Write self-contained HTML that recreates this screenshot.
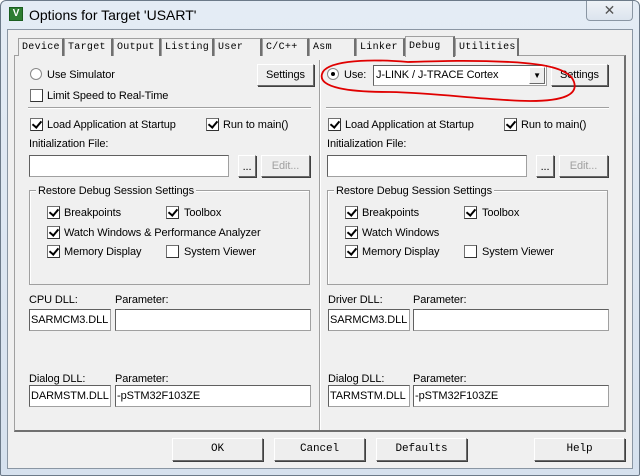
<!DOCTYPE html>
<html><head><meta charset="utf-8"><style>
*{box-sizing:border-box;margin:0;padding:0}
body{width:640px;height:476px;overflow:hidden;background:#fff;font-family:"Liberation Sans",sans-serif;font-size:11px;letter-spacing:-0.1px;color:#000;position:relative}
.a{position:absolute}
.frame{left:0;top:0;width:640px;height:476px;background:linear-gradient(#e4ecf5,#d6e1ee);border:1px solid #6c7a89;border-radius:6px 6px 2px 2px}
.client{left:7px;top:29px;width:626px;height:440px;background:#f0f0f0;border:1px solid #8a96a3}
.tab{top:38px;height:18px;background:#f0f0f0;border:1px solid #a0a0a0;border-bottom:none;border-right:2px solid #707070;font-family:"Liberation Mono",monospace;font-size:10px;letter-spacing:0.3px;padding-left:3px;line-height:17px}
.panel{left:14px;top:55px;width:612px;height:377px;border:1px solid #a0a0a0;border-right:2px solid #707070;border-bottom:2px solid #707070;background:#f0f0f0}
.cb{width:13px;height:13px;border:1px solid #333;background:#fff;border-top-color:#707070;border-left-color:#707070}
.cb.k::after{content:"";position:absolute;left:3px;top:0px;width:4px;height:7px;border:solid #000;border-width:0 2px 2px 0;transform:rotate(40deg)}
.t{white-space:nowrap;line-height:14px}
.inp{background:#fff;border:1px solid #a0a0a0;border-top-color:#606060;border-left-color:#606060;height:22px;padding:2px 1px;line-height:16px;white-space:nowrap;overflow:hidden}
.btn{background:#eee;border:1px solid #fff;border-right-color:#6a6a6a;border-bottom-color:#6a6a6a;box-shadow:1px 1px 0 #404040;text-align:center;line-height:20px}
.mono{font-family:"Liberation Mono",monospace;font-size:11px}
.grp{border:1px solid #a0a0a0;box-shadow:1px 1px 0 #fff inset}
.line{height:2px;border-top:1px solid #a0a0a0;border-bottom:1px solid #fff}
</style></head><body>
<div class="a frame"></div>
<div class="a" style="left:9px;top:7px;width:14px;height:14px;background:#2e7d32;border:1px solid #1b5e20;color:#fff;font-size:10px;font-weight:bold;line-height:12px;text-align:center">V</div>
<div class="a t" style="left:29px;top:6px;font-size:14px;line-height:18px;letter-spacing:0">Options for Target 'USART'</div>
<div class="a" style="left:586px;top:1px;width:47px;height:20px;border:1px solid #8a96a3;border-top:none;border-radius:0 0 4px 4px;background:linear-gradient(#eef2f7,#dce4ee);text-align:center;color:#555;font-size:14px;line-height:18px">✕</div>
<div class="a client"></div>
<div class="a panel"></div>
<div class="a tab" style="left:18px;width:46px">Device</div>
<div class="a tab" style="left:64px;width:49px">Target</div>
<div class="a tab" style="left:113px;width:48px">Output</div>
<div class="a tab" style="left:161px;width:53px">Listing</div>
<div class="a tab" style="left:214px;width:48px">User</div>
<div class="a tab" style="left:262px;width:47px">C/C++</div>
<div class="a tab" style="left:309px;width:47px">Asm</div>
<div class="a tab" style="left:356px;width:49px">Linker</div>
<div class="a tab" style="left:405px;width:50px;top:36px;height:21px;padding-top:1px;border-bottom:none">Debug</div>
<div class="a tab" style="left:455px;width:64px">Utilities</div>
<div class="a" style="left:319px;top:60px;width:2px;height:370px;border-left:1px solid #a0a0a0;border-right:1px solid #fff"></div>

<!-- LEFT -->
<div class="a" style="left:30px;top:68px;width:12px;height:12px;border-radius:50%;border:1px solid #888;background:#fff"></div>
<div class="a t" style="left:47px;top:68px">Use Simulator</div>
<div class="a btn" style="left:257px;top:64px;width:57px;height:22px">Settings</div>
<div class="a cb" style="left:30px;top:89px"></div>
<div class="a t" style="left:47px;top:89px">Limit Speed to Real-Time</div>
<div class="a line" style="left:28px;top:107px;width:283px"></div>

<div class="a cb k" style="left:30px;top:118px"></div>
<div class="a t" style="left:47px;top:118px">Load Application at Startup</div>
<div class="a cb k" style="left:206px;top:118px"></div>
<div class="a t" style="left:223px;top:118px">Run to main()</div>
<div class="a t" style="left:29px;top:137px">Initialization File:</div>
<div class="a inp" style="left:29px;top:155px;width:200px"></div>
<div class="a btn" style="left:238px;top:155px;width:18px;height:22px;line-height:22px">...</div>
<div class="a btn" style="left:261px;top:155px;width:49px;height:22px;color:#a0a0a0">Edit...</div>
<div class="a grp" style="left:29px;top:190px;width:281px;height:95px"></div>
<div class="a t" style="left:36px;top:184px;background:#f0f0f0;padding:0 2px">Restore Debug Session Settings</div>
<div class="a cb k" style="left:47px;top:206px"></div><div class="a t" style="left:64px;top:206px">Breakpoints</div>
<div class="a cb k" style="left:166px;top:206px"></div><div class="a t" style="left:184px;top:206px">Toolbox</div>
<div class="a cb k" style="left:47px;top:226px"></div><div class="a t" style="left:64px;top:226px">Watch Windows &amp; Performance Analyzer</div>
<div class="a cb k" style="left:47px;top:245px"></div><div class="a t" style="left:64px;top:245px">Memory Display</div>
<div class="a cb" style="left:166px;top:245px"></div><div class="a t" style="left:184px;top:245px">System Viewer</div>
<div class="a t" style="left:29px;top:293px">CPU DLL:</div>
<div class="a t" style="left:115px;top:293px">Parameter:</div>
<div class="a inp" style="left:29px;top:309px;width:82px">SARMCM3.DLL</div>
<div class="a inp" style="left:115px;top:309px;width:196px"></div>
<div class="a t" style="left:29px;top:372px">Dialog DLL:</div>
<div class="a t" style="left:115px;top:372px">Parameter:</div>
<div class="a inp" style="left:29px;top:385px;width:82px">DARMSTM.DLL</div>
<div class="a inp" style="left:115px;top:385px;width:196px">-pSTM32F103ZE</div>

<!-- RIGHT -->
<div class="a" style="left:327px;top:68px;width:12px;height:12px;border-radius:50%;border:1px solid #888;background:#fff"><div class="a" style="left:3px;top:3px;width:4px;height:4px;border-radius:50%;background:#000"></div></div>
<div class="a t" style="left:344px;top:68px">Use:</div>
<div class="a inp" style="left:373px;top:65px;width:174px;height:21px;padding:1px 2px">J-LINK / J-TRACE Cortex</div>
<div class="a btn" style="left:529px;top:67px;width:16px;height:17px;box-shadow:none;font-size:8px;line-height:16px">▼</div>
<div class="a btn" style="left:551px;top:64px;width:57px;height:22px">Settings</div>
<div class="a line" style="left:326px;top:107px;width:283px"></div>
<div class="a cb k" style="left:328px;top:118px"></div>
<div class="a t" style="left:345px;top:118px">Load Application at Startup</div>
<div class="a cb k" style="left:504px;top:118px"></div>
<div class="a t" style="left:521px;top:118px">Run to main()</div>
<div class="a t" style="left:327px;top:137px">Initialization File:</div>
<div class="a inp" style="left:327px;top:155px;width:200px"></div>
<div class="a btn" style="left:536px;top:155px;width:18px;height:22px;line-height:22px">...</div>
<div class="a btn" style="left:559px;top:155px;width:49px;height:22px;color:#a0a0a0">Edit...</div>
<div class="a grp" style="left:327px;top:190px;width:281px;height:95px"></div>
<div class="a t" style="left:334px;top:184px;background:#f0f0f0;padding:0 2px">Restore Debug Session Settings</div>
<div class="a cb k" style="left:345px;top:206px"></div><div class="a t" style="left:362px;top:206px">Breakpoints</div>
<div class="a cb k" style="left:464px;top:206px"></div><div class="a t" style="left:482px;top:206px">Toolbox</div>
<div class="a cb k" style="left:345px;top:226px"></div><div class="a t" style="left:362px;top:226px">Watch Windows</div>
<div class="a cb k" style="left:345px;top:245px"></div><div class="a t" style="left:362px;top:245px">Memory Display</div>
<div class="a cb" style="left:464px;top:245px"></div><div class="a t" style="left:482px;top:245px">System Viewer</div>
<div class="a t" style="left:328px;top:293px">Driver DLL:</div>
<div class="a t" style="left:413px;top:293px">Parameter:</div>
<div class="a inp" style="left:328px;top:309px;width:82px">SARMCM3.DLL</div>
<div class="a inp" style="left:413px;top:309px;width:196px"></div>
<div class="a t" style="left:328px;top:372px">Dialog DLL:</div>
<div class="a t" style="left:413px;top:372px">Parameter:</div>
<div class="a inp" style="left:328px;top:385px;width:82px">TARMSTM.DLL</div>
<div class="a inp" style="left:413px;top:385px;width:196px">-pSTM32F103ZE</div>

<!-- bottom buttons -->
<div class="a btn mono" style="left:172px;top:438px;width:91px;height:23px">OK</div>
<div class="a btn mono" style="left:274px;top:438px;width:91px;height:23px">Cancel</div>
<div class="a btn mono" style="left:376px;top:438px;width:91px;height:23px">Defaults</div>
<div class="a btn mono" style="left:534px;top:438px;width:91px;height:23px">Help</div>

<svg class="a" style="left:0;top:0" width="640" height="476"><path d="M408 62 C360 58 325 62 322 74 C318 88 350 92 390 92 C440 93 480 100 530 101 C565 101 578 94 574 82 C570 70 550 64 510 62 C470 60 440 61 408 62 Z" fill="none" stroke="#e00000" stroke-width="1.8"/></svg>
</body></html>
